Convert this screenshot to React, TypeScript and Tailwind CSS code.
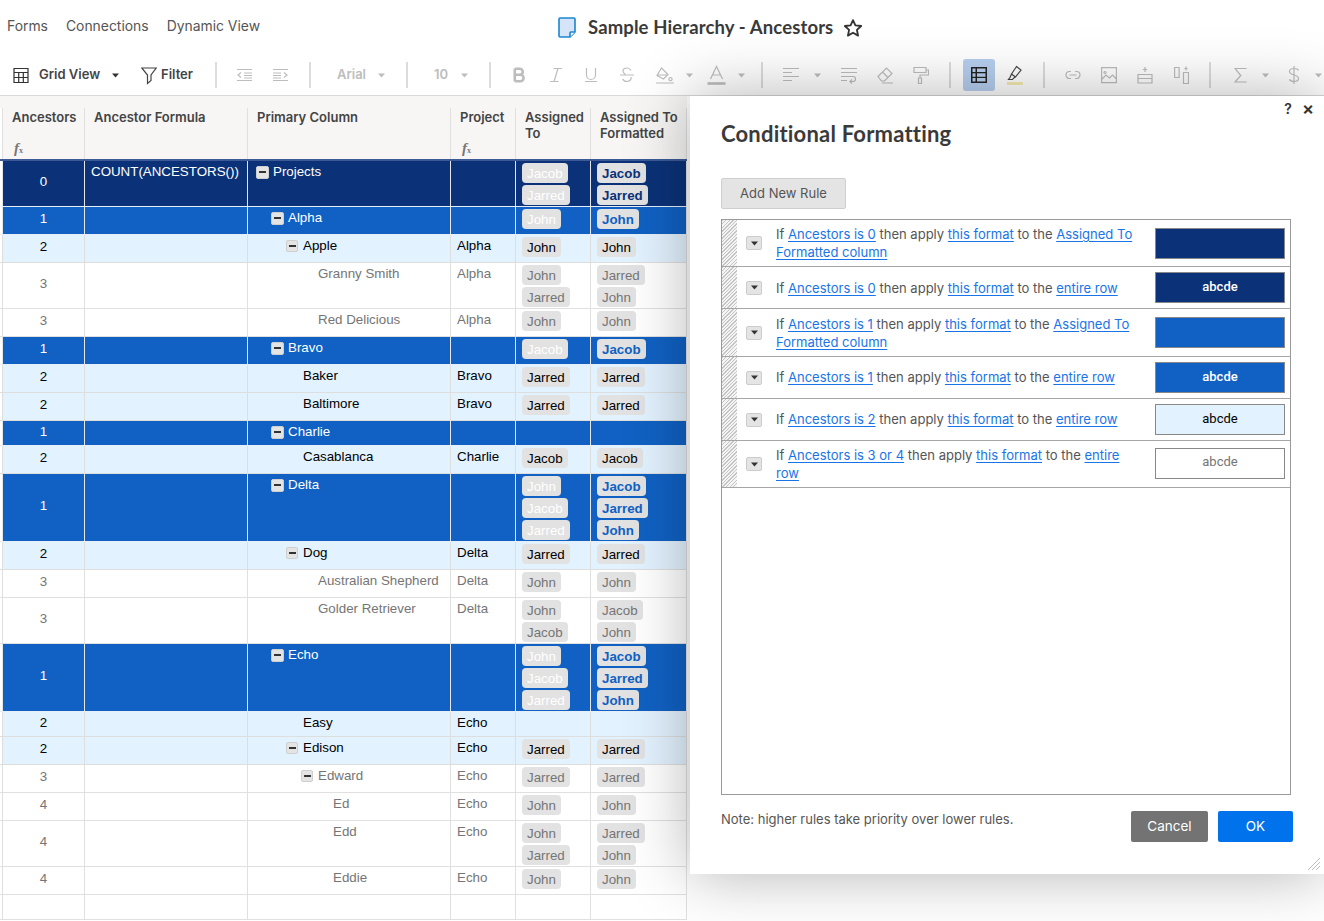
import React from "react";

type Tone = "dark" | "blue" | "light" | "plain";
type Row = {
  n?: string;
  formula?: string;
  name?: string;
  level?: number;
  exp?: boolean;
  project?: string;
  a?: string[];
  f?: string[];
  h: string;
  tone: Tone;
};

const rows: Row[] = [
  { n: "0", formula: "COUNT(ANCESTORS())", name: "Projects", level: 0, exp: true, a: ["Jacob", "Jarred"], f: ["Jacob", "Jarred"], h: "h-[46px]", tone: "dark" },
  { n: "1", name: "Alpha", level: 1, exp: true, a: ["John"], f: ["John"], h: "h-[28px]", tone: "blue" },
  { n: "2", name: "Apple", level: 2, exp: true, project: "Alpha", a: ["John"], f: ["John"], h: "h-[28px]", tone: "light" },
  { n: "3", name: "Granny Smith", level: 3, project: "Alpha", a: ["John", "Jarred"], f: ["Jarred", "John"], h: "h-[46px]", tone: "plain" },
  { n: "3", name: "Red Delicious", level: 3, project: "Alpha", a: ["John"], f: ["John"], h: "h-[28px]", tone: "plain" },
  { n: "1", name: "Bravo", level: 1, exp: true, a: ["Jacob"], f: ["Jacob"], h: "h-[28px]", tone: "blue" },
  { n: "2", name: "Baker", level: 2, project: "Bravo", a: ["Jarred"], f: ["Jarred"], h: "h-[28px]", tone: "light" },
  { n: "2", name: "Baltimore", level: 2, project: "Bravo", a: ["Jarred"], f: ["Jarred"], h: "h-[28px]", tone: "light" },
  { n: "1", name: "Charlie", level: 1, exp: true, h: "h-[25px]", tone: "blue" },
  { n: "2", name: "Casablanca", level: 2, project: "Charlie", a: ["Jacob"], f: ["Jacob"], h: "h-[28px]", tone: "light" },
  { n: "1", name: "Delta", level: 1, exp: true, a: ["John", "Jacob", "Jarred"], f: ["Jacob", "Jarred", "John"], h: "h-[68px]", tone: "blue" },
  { n: "2", name: "Dog", level: 2, exp: true, project: "Delta", a: ["Jarred"], f: ["Jarred"], h: "h-[28px]", tone: "light" },
  { n: "3", name: "Australian Shepherd", level: 3, project: "Delta", a: ["John"], f: ["John"], h: "h-[28px]", tone: "plain" },
  { n: "3", name: "Golder Retriever", level: 3, project: "Delta", a: ["John", "Jacob"], f: ["Jacob", "John"], h: "h-[46px]", tone: "plain" },
  { n: "1", name: "Echo", level: 1, exp: true, a: ["John", "Jacob", "Jarred"], f: ["Jacob", "Jarred", "John"], h: "h-[68px]", tone: "blue" },
  { n: "2", name: "Easy", level: 2, project: "Echo", h: "h-[25px]", tone: "light" },
  { n: "2", name: "Edison", level: 2, exp: true, project: "Echo", a: ["Jarred"], f: ["Jarred"], h: "h-[28px]", tone: "light" },
  { n: "3", name: "Edward", level: 3, exp: true, project: "Echo", a: ["Jarred"], f: ["Jarred"], h: "h-[28px]", tone: "plain" },
  { n: "4", name: "Ed", level: 4, project: "Echo", a: ["John"], f: ["John"], h: "h-[28px]", tone: "plain" },
  { n: "4", name: "Edd", level: 4, project: "Echo", a: ["John", "Jarred"], f: ["Jarred", "John"], h: "h-[46px]", tone: "plain" },
  { n: "4", name: "Eddie", level: 4, project: "Echo", a: ["John"], f: ["John"], h: "h-[28px]", tone: "plain" },
  { h: "h-[25px]", tone: "plain" },
];

const toneCell: Record<Tone, string> = {
  dark: "bg-[#0b3278] text-white border-[#e6e6e6]",
  blue: "bg-[#1061c3] text-white border-[#e6e6e6]",
  light: "bg-[#e2f2fe] text-black border-[#dedede]",
  plain: "bg-white text-[#757575] border-[#e0e0e0]",
};
const toneRow: Record<Tone, string> = {
  dark: "border-[#e6eef8]",
  blue: "border-[#e6eef8]",
  light: "border-[#dedede]",
  plain: "border-[#e0e0e0]",
};
const toneFormatted: Record<Tone, string> = {
  dark: "font-bold text-[#0b3278]",
  blue: "font-bold text-[#1061c3]",
  light: "text-black",
  plain: "text-[#757575]",
};
const boxIndent = ["pl-[8px]", "pl-[23px]", "pl-[38px]", "pl-[53px]", "pl-[68px]"];
const textIndent = ["pl-[25px]", "pl-[40px]", "pl-[55px]", "pl-[70px]", "pl-[85px]"];

function Pills({ names, className }: { names?: string[]; className?: string }) {
  return (
    <div className="flex flex-col items-start gap-[2px] pl-[6px] pt-[2px]">
      {(names ?? []).map((p, i) => (
        <span key={i} className={`h-[20px] rounded-[4px] bg-[#e2e2e2] px-[5px] text-[13.33px] leading-[22px] ${className ?? ""}`}>
          {p}
        </span>
      ))}
    </div>
  );
}

function Expander({ big }: { big: boolean }) {
  return (
    <span className={`flex shrink-0 items-center justify-center rounded-[2px] border border-[#cfcfcf] bg-[#e4e4e4] ${big ? "mr-[4px] h-[13px] w-[13px]" : "mr-[5px] h-[12px] w-[12px]"}`}>
      <span className="h-[2px] w-[7px] bg-[#333]" />
    </span>
  );
}

function GridRow({ r }: { r: Row }) {
  const c = toneCell[r.tone];
  const big = r.tone === "dark" || r.tone === "blue";
  const lvl = r.level ?? 0;
  return (
    <div className={`flex w-[687px] border-b font-['Liberation_Sans',Arial,sans-serif] text-[13.33px] leading-[20px] ${r.h} ${toneRow[r.tone]}`}>
      <div className="w-[2px] shrink-0 bg-white" />
      <div className={`flex w-[83px] shrink-0 items-center justify-center border-x pb-[3px] ${c}`}>{r.n}</div>
      <div className={`w-[163px] shrink-0 border-r pt-[1px] pl-[6px] ${c}`}>{r.formula}</div>
      <div className={`w-[203px] shrink-0 border-r pt-[1px] ${c}`}>
        {r.name && (
          <div className={`flex ${r.exp ? boxIndent[lvl] : textIndent[lvl]}`}>
            {r.exp && (
              <span className="flex h-[20px] items-center">
                <Expander big={big} />
              </span>
            )}
            <span className="whitespace-nowrap">{r.name}</span>
          </div>
        )}
      </div>
      <div className={`w-[65px] shrink-0 border-r pt-[1px] pl-[6px] ${c}`}>{r.project}</div>
      <div className={`w-[75px] shrink-0 border-r ${c}`}>
        <Pills names={r.a} className={big ? "text-white" : ""} />
      </div>
      <div className={`w-[96px] shrink-0 border-r ${c}`}>
        <Pills names={r.f} className={toneFormatted[r.tone]} />
      </div>
    </div>
  );
}

function Fx() {
  return (
    <span className="ml-[2px] block font-['Liberation_Serif',serif] text-[15px] leading-[14px] font-bold text-[#777] italic">
      f<span className="text-[8px] not-italic">x</span>
    </span>
  );
}

function HeaderCell({ w, title, fx, first }: { w: string; title: React.ReactNode; fx?: boolean; first?: boolean }) {
  return (
    <div className={`shrink-0 border-r border-[#e0e0e0] pt-[1px] pl-[9px] font-['Inter',sans-serif] text-[13px] leading-[16px] font-semibold text-[#444] ${w} ${first ? "border-l" : ""}`}>
      <div className="h-[32px]">{title}</div>
      {fx && <Fx />}
    </div>
  );
}

function Caret({ className }: { className: string }) {
  return (
    <svg width="7" height="5" viewBox="0 0 7 5" className={`shrink-0 ${className}`}>
      <path d="M0 0.5h7L3.5 4.5z" fill="currentColor" />
    </svg>
  );
}

function Sep({ className }: { className: string }) {
  return <div className={`h-[26px] w-[2px] shrink-0 bg-[#dcdcdc] ${className}`} />;
}

function I({ w, h = 18, className, children }: { w: number; h?: number; className: string; children: React.ReactNode }) {
  return (
    <svg width={w} height={h} viewBox={`0 0 ${w} ${h}`} fill="none" stroke="currentColor" strokeWidth="1.2" className={`shrink-0 ${className}`}>
      {children}
    </svg>
  );
}

function Toolbar() {
  return (
    <div className="flex h-[40px] items-center font-['Inter',sans-serif] text-[13px] text-[#bdbdbd]">
      <I w={16} className="ml-[13px] text-[#333]">
        <path d="M1 2.500h14v14H1zM1 6.500h14M1 11.500h14M5.700 6.500v10M10.300 6.500v10" />
      </I>
      <span className="ml-[10px] w-[61px] font-semibold whitespace-nowrap text-[#444]">Grid View</span>
      <Caret className="ml-[12px] text-[#333]" />
      <I w={16} h={20} className="ml-[22px] text-[#444]">
        <path d="M0.800 3h14.400L10 10v5.500L6.500 18.500V10z" />
      </I>
      <span className="ml-[4px] w-[33px] font-semibold text-[#444]">Filter</span>
      <Sep className="ml-[21px]" />
      <I w={15} className="ml-[20px]">
        <path d="M0 3.500h15M0 14.500h15M7 7h8M7 9.500h8M7 12h8M4 6.500L1 9l3 2.500" />
      </I>
      <I w={15} className="ml-[21px]">
        <path d="M0 3.500h15M0 14.500h15M0 7h8M0 9.500h8M0 12h8M11 6.500L14 9l-3 2.500" />
      </I>
      <Sep className="ml-[21px]" />
      <span className="ml-[26px] w-[30px] font-semibold">Arial</span>
      <Caret className="ml-[11px]" />
      <Sep className="ml-[21px]" />
      <span className="ml-[26px] w-[16px] font-semibold">10</span>
      <Caret className="ml-[11px]" />
      <Sep className="ml-[21px]" />
      <I w={12} className="ml-[22px]">
        <path strokeWidth="2.600" d="M1.800 2.500v13M1.800 2.800h5a3 3 0 0 1 0 6h-5M1.800 8.800h5.600a3.200 3.200 0 0 1 0 6.400H1.800" />
      </I>
      <I w={14} className="ml-[24px]">
        <path d="M4.500 2.500H13M1 15.500h8.500M9 2.500L5 15.500" />
      </I>
      <I w={12} className="ml-[22px]">
        <path d="M1.500 2v7a4.500 4.500 0 0 0 9 0V2M0 15.500h12" />
      </I>
      <I w={14} className="ml-[23px]">
        <path d="M0 9h14M11 4.500C10 2.700 8.700 2 7 2 4.700 2 3 3.200 3 5c0 1.500 1 2.500 2.500 3.500M11.200 11c.3 2.600-1.700 4.500-4.200 4.500-2 0-3.500-.8-4.300-2.500" />
      </I>
      <I w={18} className="ml-[22px]">
        <path d="M5.500 2L12 8.500 7.500 13 1 9.500zM1.500 9h10M14.500 11.500a1.600 1.600 0 1 0 .01 0M0 17h18" />
      </I>
      <Caret className="ml-[12px]" />
      <I w={19} h={20} className="ml-[14px]">
        <path d="M3.500 14L9.500 1.500 15.500 14M5.500 10h8" />
        <path d="M0.500 18.500h18" strokeWidth="2.600" />
      </I>
      <Caret className="ml-[12px]" />
      <Sep className="ml-[16px]" />
      <I w={16} className="ml-[20px]">
        <path d="M0 2.500h16M0 6.500h9M0 10.500h16M0 14.500h9" />
      </I>
      <Caret className="ml-[15px]" />
      <I w={16} className="ml-[20px]">
        <path d="M0 2.500h16M0 6.500h16M0 10.500h12a2.500 2.500 0 0 1 0 5H9M11 13.500l-2 2 2 2M0 14.500h6" />
      </I>
      <I w={16} className="ml-[20px]">
        <path d="M1 10.500L9.500 2 15 7.500 7.500 15H4.500zM5.500 6L11 11.500M5 17h11" />
      </I>
      <I w={16} className="ml-[20px]">
        <path d="M1 1.500h12v5H1zM13 4h2.500v5H7v3M5.500 12h3v5.500h-3z" />
      </I>
      <Sep className="ml-[20px]" />
      <div className="ml-[12px] flex h-[32px] w-[32px] shrink-0 items-center justify-center rounded-[3px] bg-[#b6cfef]">
        <svg width="16" height="16" viewBox="0 0 16 16">
          <rect x="0" y="0" width="16" height="16" fill="#222" />
          <rect x="1.500" y="1.500" width="3" height="3.500" fill="#b6cfef" />
          <rect x="6" y="1.500" width="8.500" height="3.500" fill="#b6cfef" />
          <rect x="1.500" y="6.300" width="3" height="3.500" fill="#b6cfef" />
          <rect x="6" y="6.300" width="8.500" height="3.500" fill="#b6cfef" />
          <rect x="1.500" y="11" width="3" height="3.500" fill="#b6cfef" />
          <rect x="6" y="11" width="8.500" height="3.500" fill="#b6cfef" />
        </svg>
      </div>
      <svg width="16" height="20" viewBox="0 0 16 20" fill="none" stroke="#444" strokeWidth="1.200" className="ml-[12px] shrink-0">
        <path d="M9.500 1.500L14 5l-5.500 7-4-3zM4.500 9L3 12.500l-1.500 2h4l1-1.300 1.500-1" />
        <path d="M0 18.500h16" stroke="#f6e8a8" strokeWidth="2.600" />
      </svg>
      <Sep className="ml-[20px]" />
      <I w={16} className="ml-[20px]">
        <path d="M6 5.500H4.500a3.500 3.500 0 0 0 0 7H6M10 5.500h1.500a3.500 3.500 0 0 1 0 7H10M4.500 9h7" />
      </I>
      <I w={16} className="ml-[20px]">
        <path d="M0.600 1.600h14.800v15H0.600zM0.600 13.500l4.400-4.500 3.500 3 3-3 3.900 4M4 5.500a1 1 0 1 0 .01 0" />
      </I>
      <I w={16} className="ml-[20px]">
        <path d="M8 1v5M5.800 3.500h4.400M1 8.500h14v4H1zM1 12.500h14v4.500H1z" />
      </I>
      <I w={15} className="ml-[21px]">
        <path d="M0.600 1.500h4.500v10H0.600zM9.500 6.500h5v11h-5zM12 0.500v4M10.500 2.500h3" />
      </I>
      <Sep className="ml-[20px]" />
      <I w={13} className="ml-[23px]">
        <path d="M12.500 2.500H1L6.800 9.500 1 16h11.500" />
      </I>
      <Caret className="ml-[15px]" />
      <I w={12} h={20} className="ml-[19px]">
        <path d="M10.500 5.500C10 4 8 3.500 6 3.500 3.500 3.500 1.500 4.500 1.500 6.500c0 4.500 9 2.500 9 7 0 2-2 3-4.500 3-2 0-4-.7-4.500-2.200M6 1v18" />
      </I>
      <Caret className="ml-[15px]" />
    </div>
  );
}

function L({ children }: { children: React.ReactNode }) {
  return <span className="text-[#1874e8] underline underline-offset-2">{children}</span>;
}

function Rule({ h, cond, target, swatch, textUp }: { h: string; cond: string; target: React.ReactNode; textUp?: boolean; swatch: { bg: string; text?: string; c?: string; w?: string; up?: boolean } }) {
  return (
    <div className={`flex items-center border-b border-[#a6a6a6] ${h}`}>
      <div className="h-full w-[15px] shrink-0 bg-[repeating-linear-gradient(135deg,#c4c4c4_0,#c4c4c4_1px,#f4f4f4_1px,#f4f4f4_2.5px)]" />
      <div className="ml-[9px] flex h-[14px] w-[16px] shrink-0 items-center justify-center rounded-[2px] border border-[#cccccc] bg-[#e4e4e4]">
        <Caret className="text-[#333]" />
      </div>
      <div className={`ml-[14px] w-[369px] shrink-0 text-[13.03px] leading-[18px] text-[#555] ${textUp ? "mb-[2px]" : ""}`}>
        If <L>{cond}</L> then apply <L>this format</L> to the {target}
      </div>
      <div className={`ml-[10px] flex h-[31px] w-[130px] shrink-0 justify-center border border-[#888] font-['Roboto',sans-serif] text-[13px] leading-[18px] ${swatch.up ? "mb-[1px] pt-[4px]" : "pt-[5px]"} ${swatch.bg} ${swatch.c ?? ""} ${swatch.w ?? ""}`}>
        {swatch.text}
      </div>
    </div>
  );
}

function Dialog() {
  const col = (
    <>
      <L>Assigned To</L> <L>Formatted column</L>
    </>
  );
  return (
    <div className="absolute top-0 left-[690px] z-10 flex h-[778px] w-[634px] flex-col bg-white pl-[31px] font-['Inter',sans-serif] text-[#555] shadow-[0_0_60px_rgba(0,0,0,0.3)]">
      <div className="absolute top-[5px] right-[10px] flex items-center gap-[10px] text-[14px] leading-[16px] font-semibold text-[#333]">
        <span>?</span>
        <span className="text-[18px]">×</span>
      </div>
      <h1 className="mt-[24px] font-['Lato',sans-serif] text-[22px] leading-[28px] font-bold tracking-[0.2px] text-[#3a3a3a]">Conditional Formatting</h1>
      <button className="mt-[30px] h-[31px] w-[125px] rounded-[2px] border border-[#cfcfcf] bg-[#e4e4e4] text-[13px] text-[#555]">Add New Rule</button>
      <div className="mt-[10px] h-[576px] w-[570px] border border-[#9a9a9a]">
        <Rule h="h-[47px]" cond="Ancestors is 0" target={col} swatch={{ bg: "bg-[#0b3278]" }} />
        <Rule h="h-[42px]" cond="Ancestors is 0" target={<L>entire row</L>} swatch={{ bg: "bg-[#0b3278]", text: "abcde", c: "text-white", w: "font-medium" }} />
        <Rule h="h-[48px]" cond="Ancestors is 1" target={col} swatch={{ bg: "bg-[#1061c3]" }} />
        <Rule h="h-[42px]" cond="Ancestors is 1" textUp target={<L>entire row</L>} swatch={{ bg: "bg-[#1061c3]", text: "abcde", c: "text-white", w: "font-medium" }} />
        <Rule h="h-[42px]" cond="Ancestors is 2" textUp target={<L>entire row</L>} swatch={{ bg: "bg-[#e2f2fe]", text: "abcde", c: "text-black" }} />
        <Rule
          h="h-[47px]"
          cond="Ancestors is 3 or 4"
          target={
            <>
              <L>entire</L> <L>row</L>
            </>
          }
          swatch={{ bg: "bg-white", text: "abcde", c: "text-[#757575]", up: true }}
        />
      </div>
      <div className="mt-[16px] flex w-[572px] items-start justify-between">
        <span className="-mt-[1px] text-[13px] leading-[18px] text-[#555]">Note: higher rules take priority over lower rules.</span>
        <div className="flex gap-[10px] text-[13.5px] text-white">
          <button className="h-[31px] w-[77px] rounded-[2px] bg-[#737373]">Cancel</button>
          <button className="h-[31px] w-[75px] rounded-[2px] bg-[#0073ec]">OK</button>
        </div>
      </div>
      <svg width="14" height="14" viewBox="0 0 14 14" className="absolute right-[3px] bottom-[3px]" stroke="#bdbdbd" strokeWidth="1">
        <path d="M1 13L13 1M5 13l8-8M9 13l4-4" />
      </svg>
    </div>
  );
}

export default function App() {
  return (
    <div className="flex h-[921px] w-[1324px] flex-col overflow-hidden bg-white">
      <div className="flex h-[55px] items-center font-['Inter',sans-serif] text-[#555]">
        <div className="flex w-[558px] shrink-0 gap-[18px] pb-[3px] pl-[7px] text-[13.9px]">
          <span>Forms</span>
          <span>Connections</span>
          <span>Dynamic View</span>
        </div>
        <svg width="18" height="21" viewBox="0 0 18 21" className="shrink-0">
          <path d="M1 2a1 1 0 0 1 1-1h14a1 1 0 0 1 1 1v13l-5 5H2a1 1 0 0 1-1-1z" fill="#d5e4f8" stroke="#1a86d0" strokeWidth="1.600" />
          <path d="M17 15h-4a1 1 0 0 0-1 1v4" fill="#fff" stroke="#1a86d0" strokeWidth="1.600" />
        </svg>
        <span className="ml-[12px] font-['Lato',sans-serif] text-[18.5px] font-bold tracking-[0.12px] whitespace-nowrap text-[#3a3a3a]">Sample Hierarchy - Ancestors</span>
        <svg width="20" height="20" viewBox="0 0 24 24" fill="none" stroke="#333" strokeWidth="2.200" strokeLinejoin="round" className="ml-[10px] shrink-0">
          <path d="M12 2.500l2.900 6.300 6.900.8-5.100 4.700 1.400 6.800-6.100-3.400-6.100 3.400 1.400-6.800L2.200 9.600l6.900-.8z" />
        </svg>
      </div>
      <Toolbar />
      <div className="relative flex-1 border-t border-[#d9d9d9]">
        <div className="w-[687px]">
          <div className="h-[12px] bg-[#f7f6f5]" />
          <div className="flex h-[53px] border-b-2 border-[#3d5a96] bg-[#f7f6f5]">
            <div className="w-[2px] shrink-0 bg-white" />
            <HeaderCell w="w-[83px]" title="Ancestors" fx first />
            <HeaderCell w="w-[163px]" title="Ancestor Formula" />
            <HeaderCell w="w-[203px]" title="Primary Column" />
            <HeaderCell w="w-[65px]" title="Project" fx />
            <HeaderCell w="w-[75px]" title={<>Assigned<br />To</>} />
            <HeaderCell w="w-[96px]" title={<>Assigned To<br />Formatted</>} />
          </div>
          {rows.map((r, i) => (
            <GridRow key={i} r={r} />
          ))}
        </div>
        <Dialog />
      </div>
    </div>
  );
}
